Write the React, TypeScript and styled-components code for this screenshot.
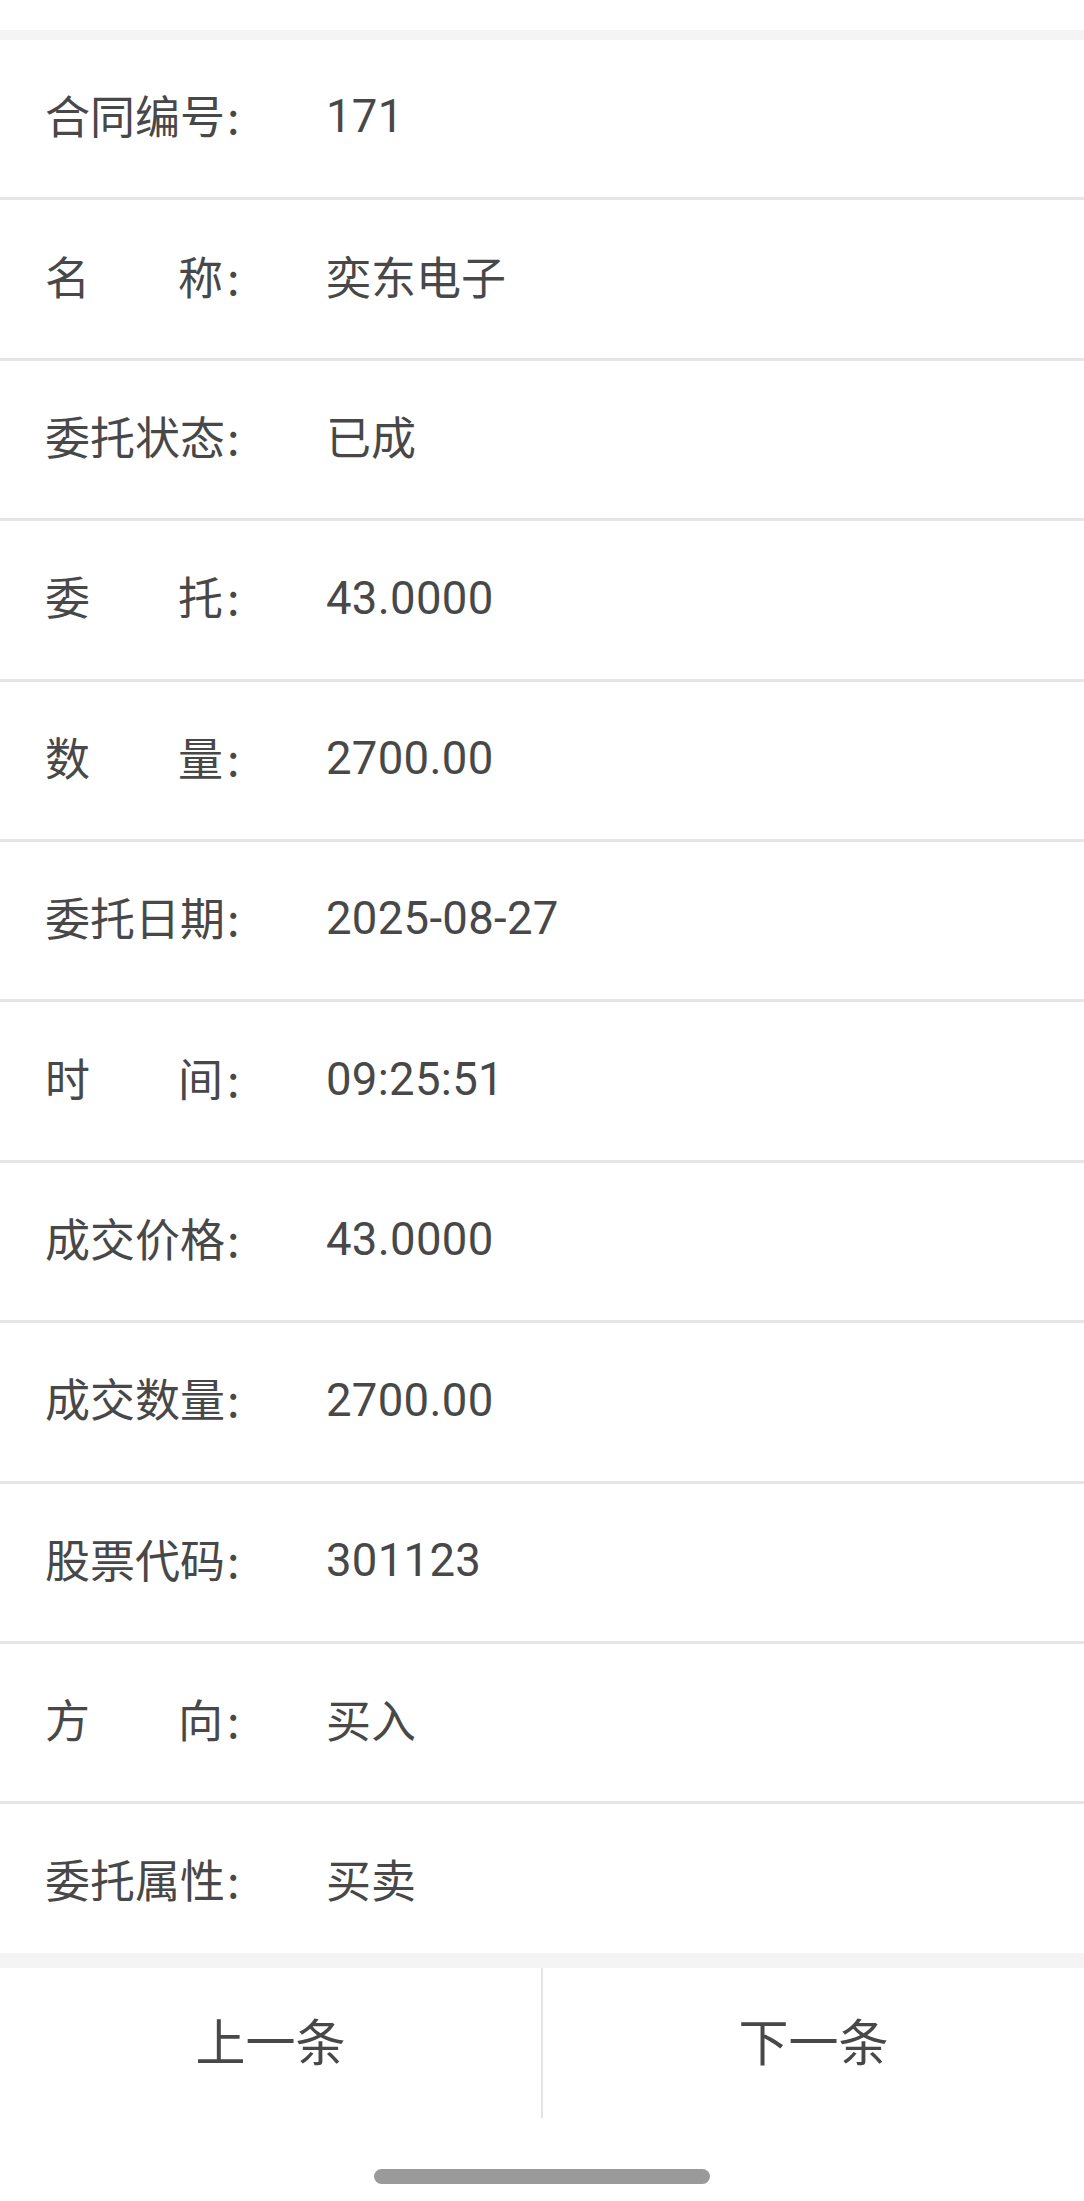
import React from "react";
import styled, { createGlobalStyle } from "styled-components";

const GlobalStyle = createGlobalStyle`
  html, body {
    margin: 0;
    padding: 0;
    background: #ffffff;
  }
  body {
    font-family: "Noto Sans CJK SC", "Noto Sans", sans-serif;
    color: #484848;
  }
  * { box-sizing: border-box; }
`;

const Page = styled.div`
  width: 1084px;
  height: 2201px;
  display: flex;
  flex-direction: column;
  background: #ffffff;
  overflow: hidden;
`;

const StatusSpace = styled.div`
  height: 30px;
  flex: none;
  background: #ffffff;
`;

const GrayBand = styled.div<{ $h: number }>`
  height: ${(p) => p.$h}px;
  flex: none;
  background: #f4f4f4;
`;

const List = styled.div`
  flex: 1;
  min-height: 0;
  overflow: hidden;
  display: flex;
  flex-direction: column;
`;

const Row = styled.div`
  flex: none;
  height: 160.4px;
  display: flex;
  align-items: center;
  padding: 0 45px 8px;
  border-bottom: 3px solid #e6e6e6;
  &:last-child {
    border-bottom: none;
    height: 157.4px;
  }
`;

const Label = styled.div`
  flex: none;
  width: 281px;
  display: flex;
  align-items: center;
  font-size: 45px;
  line-height: 1;
  color: #484848;
`;

const LabelText = styled.span`
  display: inline-block;
  width: 178px;
  text-align: justify;
  text-align-last: justify;
  white-space: nowrap;
`;

const Colon = styled.span`
  margin-left: 4px;
  font-family: "Noto Sans CJK SC", sans-serif;
`;

const Value = styled.div<{ $numeric?: boolean }>`
  flex: 1;
  margin-top: ${(p) => (p.$numeric ? "5px" : "0")};
  font-family: ${(p) =>
    p.$numeric ? `Roboto, "Noto Sans", sans-serif` : `"Noto Sans CJK SC", sans-serif`};
  font-size: ${(p) => (p.$numeric ? "45.5px" : "45px")};
  letter-spacing: ${(p) => (p.$numeric ? "0.3px" : "0")};
  line-height: 1;
  color: #484848;
  white-space: nowrap;
`;

const Footer = styled.div`
  flex: none;
  height: 150px;
  display: flex;
  background: #ffffff;
`;

const NavButton = styled.button`
  flex: 1;
  border: none;
  background: #ffffff;
  padding: 0 0 9px;
  margin: 0;
  display: flex;
  align-items: center;
  justify-content: center;
  font-family: "Noto Sans CJK SC", sans-serif;
  font-size: 50px;
  line-height: 1;
  color: #484848;
  cursor: pointer;
`;

const Divider = styled.div`
  flex: none;
  width: 2px;
  align-self: stretch;
  background: #e3e3e3;
`;

const HomeArea = styled.div`
  flex: none;
  height: 83px;
  display: flex;
  justify-content: center;
  padding-top: 51px;
  background: #ffffff;
`;

const HomePill = styled.div`
  width: 336px;
  height: 15px;
  border-radius: 8px;
  background: #9a9a9a;
`;

type Item = { label: string; value: string; numeric?: boolean };

const items: Item[] = [
  { label: "合同编号", value: "171", numeric: true },
  { label: "名称", value: "奕东电子" },
  { label: "委托状态", value: "已成" },
  { label: "委托", value: "43.0000", numeric: true },
  { label: "数量", value: "2700.00", numeric: true },
  { label: "委托日期", value: "2025-08-27", numeric: true },
  { label: "时间", value: "09:25:51", numeric: true },
  { label: "成交价格", value: "43.0000", numeric: true },
  { label: "成交数量", value: "2700.00", numeric: true },
  { label: "股票代码", value: "301123", numeric: true },
  { label: "方向", value: "买入" },
  { label: "委托属性", value: "买卖" },
];

export default function App() {
  return (
    <>
      <GlobalStyle />
      <Page>
        <StatusSpace />
        <GrayBand $h={10} />
        <List>
          {items.map((it, i) => (
            <Row key={i}>
              <Label>
                <LabelText>{it.label}</LabelText>
                <Colon>:</Colon>
              </Label>
              <Value $numeric={it.numeric}>{it.value}</Value>
            </Row>
          ))}
        </List>
        <GrayBand $h={15} />
        <Footer>
          <NavButton>上一条</NavButton>
          <Divider />
          <NavButton>下一条</NavButton>
        </Footer>
        <HomeArea>
          <HomePill />
        </HomeArea>
      </Page>
    </>
  );
}
